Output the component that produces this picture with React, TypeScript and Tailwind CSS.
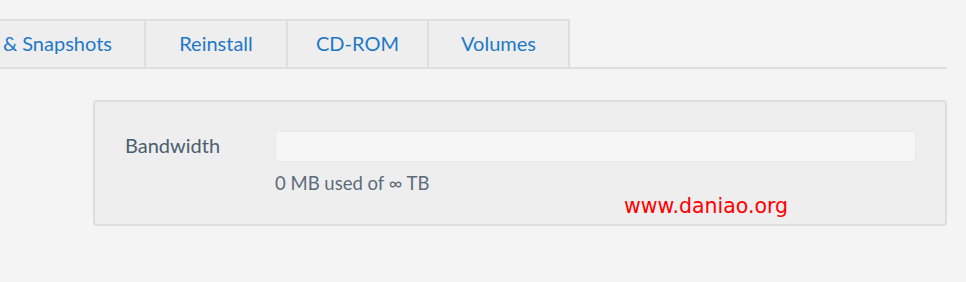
export default function App() {
  const tabs = ["Reinstall", "CD-ROM", "Volumes"];

  return (
    <div className="relative h-[282px] w-[966px] overflow-hidden bg-[#f4f4f4] font-['Lato',sans-serif]">
      <div className="pt-[19px] pr-[19px]">
        <div className="flex border-b-2 border-[#dedede]">
          <div className="flex h-[48px] w-[146px] items-center justify-end border-t-2 border-r-2 border-[#dedede] bg-[#eeeeee] pr-[32px] pb-[2px] text-[20px] text-[#1e78c8]">
            &amp; Snapshots
          </div>
          {tabs.map((t, i) => (
            <div
              key={t}
              className={
                "flex h-[48px] items-center justify-center border-t-2 border-r-2 border-[#dedede] bg-[#eeeeee] pb-[2px] text-[20px] text-[#1e78c8] " +
                (i === 0 ? "w-[142px]" : "w-[141px]")
              }
            >
              {t}
            </div>
          ))}
        </div>
      </div>

      <div className="ml-[93px] mr-[19px] mt-[31px] flex h-[126px] items-start rounded-[4px] border-2 border-[#dddddd] bg-[#eeeeee] pt-[29px] pr-[29px]">
        <div className="-mt-[1px] w-[180px] pl-[30px] text-[20px] text-[#4b5e70]">Bandwidth</div>
        <div className="flex-1">
          <div className="h-[31px] rounded-[4px] border border-[#e8e8e8] bg-[#f6f6f6]" />
          <div className="mt-[8px] text-[18.5px] text-[#5b6b7b]">0 MB used of ∞ TB</div>
        </div>
      </div>

      <div className="absolute left-[624px] top-[196px] font-['DejaVu_Sans',sans-serif] text-[20.5px] leading-none text-[#ff0000]">
        www.daniao.org
      </div>
    </div>
  );
}
